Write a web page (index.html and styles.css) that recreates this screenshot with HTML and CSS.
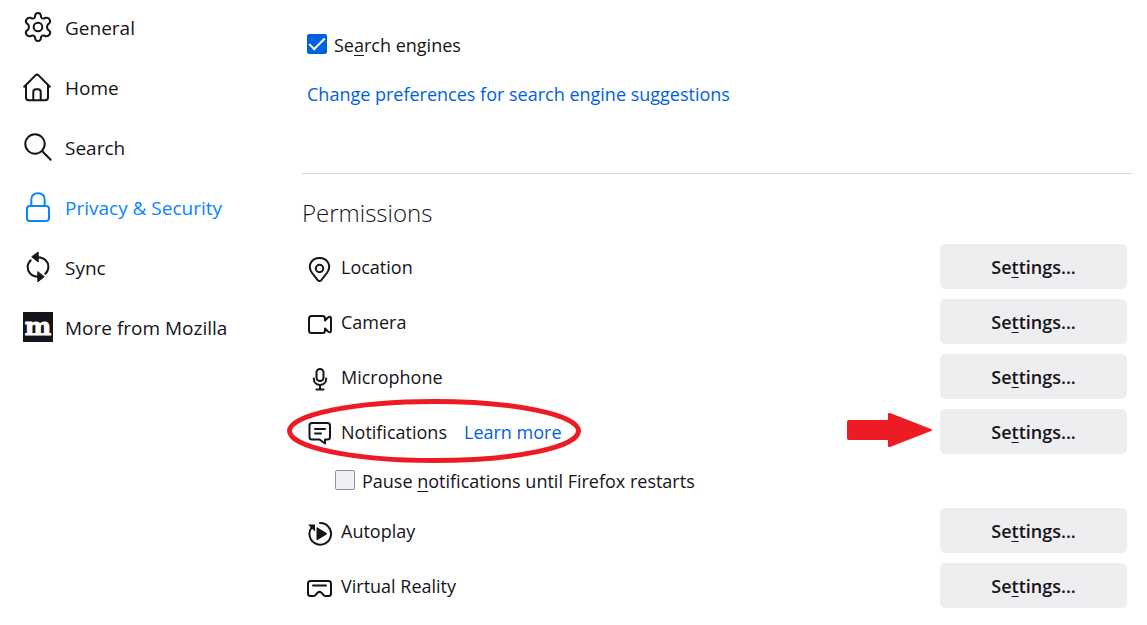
FILE: index.html
```
<!DOCTYPE html>
<html lang="en">
<head>
    <meta charset="UTF-8">
    <title>Settings</title>
    <link rel="stylesheet" href="styles.css">
</head>
<body>

    <!-- Categories -->
    <nav class="categories">
        <a class="category" href="#general">
            <svg class="category-icon" viewBox="0 0 30 30">
                <path d="M12.2 3.5Q12.5 1 15 1T17.8 3.5L18.2 5.4Q19 6.9 20.8 6.5L22.8 5.8Q25.2 5.2 26.6 7.6T26.1 11.4L24.6 12.8Q23.4 15 24.6 17.2L26.1 18.6Q28 20.2 26.6 22.4T22.8 24.2L20.8 23.5Q19 23.1 18.2 24.6L17.8 26.5Q17.5 29 15 29T12.2 26.5L11.8 24.6Q11 23.1 9.2 23.5L7.2 24.2Q4.8 24.8 3.4 22.4T3.9 18.6L5.4 17.2Q6.6 15 5.4 12.8L3.9 11.4Q2 9.8 3.4 7.6T7.2 5.8L9.2 6.5Q11 6.9 11.8 5.4Z"/>
                <circle cx="15" cy="15" r="4.3"/>
            </svg>
            <span>General</span>
        </a>
        <a class="category" href="#home">
            <svg class="category-icon" viewBox="0 0 30 30">
                <path d="M1.2 14.8 12.4 3.4Q14 1.8 15.6 3.4L26.8 14.8M3 13.5V25.5Q3 28.2 5.7 28.2H22.3Q25 28.2 25 25.5V13.5M10.3 28V20Q10.3 17.3 13 17.3H15Q17.7 17.3 17.7 20V28"/>
            </svg>
            <span>Home</span>
        </a>
        <a class="category" href="#search">
            <svg class="category-icon" viewBox="0 0 30 30">
                <circle cx="12" cy="12" r="9.7"/>
                <path d="M19 19 27.7 27.7"/>
            </svg>
            <span>Search</span>
        </a>
        <a class="category selected" href="#privacy">
            <svg class="category-icon" viewBox="0 0 30 30">
                <path d="M8.3 14V7.7Q8.3 1.2 15 1.2T21.7 7.7V14"/>
                <rect x="4" y="14" width="22" height="15" rx="2.8"/>
            </svg>
            <span>Privacy &amp; Security</span>
        </a>
        <a class="category" href="#sync">
            <svg class="category-icon" viewBox="0 0 30 30">
                <path d="M7.7 8.2C3.6 12.2 3.7 18.1 7.3 21.7Q10 24.7 15 24.8M15 5.2Q20 5.3 22.7 8.3C26.3 11.9 26.4 17.8 22.3 21.8"/>
                <path class="solid" d="M15.2.2V10L9 5.1ZM14.8 20V29.8L21 24.9Z"/>
            </svg>
            <span>Sync</span>
        </a>
        <a class="category" href="#mozilla">
            <svg class="category-icon" viewBox="0 0 30 30">
                <rect class="logo-tile" width="30" height="30"/>
                <text class="logo-letter" x="15" y="23" text-anchor="middle">m</text>
            </svg>
            <span>More from Mozilla</span>
        </a>
    </nav>

    <!-- Pane -->
    <main class="pane">
        <section class="suggestions">
            <div class="check-row">
                <input type="checkbox" id="search-engines" checked>
                <label for="search-engines">Se<u>a</u>rch engines</label>
            </div>
            <a class="link" href="#search">Change preferences for search engine suggestions</a>
        </section>

        <section class="permissions">
            <h2>Permissions</h2>

            <div class="permission">
                <svg class="permission-icon" viewBox="0 0 26 26">
                    <path d="M13.500 25Q14.500 25 15.300 24.100L20.900 17C26.500 9.300 20.800 2 13.500 2S.5 9.300 6.100 17L11.700 24.100Q12.500 25 13.500 25Z"/>
                    <circle cx="13.500" cy="12.500" r="3.700"/>
                </svg>
                <span id="location">Location</span>
                <button type="button" aria-describedby="location">Se<u>t</u>tings...</button>
            </div>

            <div class="permission">
                <svg class="permission-icon" viewBox="0 0 26 26">
                    <path d="M19 9V7.500Q19 5 16.500 5H5.500Q3 5 3 7.500V19.500Q3 22 5.500 22H16.500Q19 22 19 19.500V17.500L22 20.500Q25 22.500 25 19.500V7.500Q25 4.500 22 6.500L19 9.500"/>
                </svg>
                <span id="camera">Camera</span>
                <button type="button" aria-describedby="camera">Se<u>t</u>tings...</button>
            </div>

            <div class="permission">
                <svg class="permission-icon" viewBox="0 0 26 26">
                    <rect x="10.500" y="3" width="7" height="12" rx="3.500"/>
                    <path d="M7.800 12.500C7.800 21 20.200 21 20.200 12.500M14 19V23.500M10.500 23.500H17.500"/>
                </svg>
                <span id="microphone">Microphone</span>
                <button type="button" aria-describedby="microphone">Se<u>t</u>tings...</button>
            </div>

            <div class="permission">
                <svg class="permission-icon" viewBox="0 0 26 26">
                    <path d="M6 2H21.500Q24 2 24 4.500V16Q24 18.500 21.500 18.500H19V22.500L13.500 18.500H6Q3.500 18.500 3.500 16V4.500Q3.500 2 6 2ZM9 8H19M9 12.500H15"/>
                </svg>
                <span id="notifications">Notifications</span>
                <a class="link" href="#learn-more">Learn more</a>
                <button type="button" aria-describedby="notifications">Se<u>t</u>tings...</button>
                <!-- Markers over the notifications row -->
                <svg class="circle-mark" viewBox="0 0 294 64">
                    <ellipse cx="147" cy="32" rx="144.500" ry="29.500"/>
                </svg>
                <svg class="arrow-mark" viewBox="0 0 86 36">
                    <path d="M2 8H41V2Q41 .5 43 1L84 17Q86 18 84 19L43 35Q41 35.500 41 34V28H2Q0 28 0 26V10Q0 8 2 8Z"/>
                </svg>
            </div>

            <div class="check-row pause">
                <input type="checkbox" id="pause-notifications">
                <label for="pause-notifications">Pause <u>n</u>otifications until Firefox restarts</label>
            </div>

            <div class="permission">
                <svg class="permission-icon" viewBox="0 0 26 26">
                    <path d="M14 3A10.800 10.800 0 1 1 5.500 7.500"/>
                    <path class="solid flat" d="M2 4.500H9V11.500L6.500 9 4.500 9.500V7ZM10.500 8Q10.500 7 11.500 7.500L20.500 13Q21.300 13.700 20.500 14.400L11.500 20Q10.500 20.500 10.500 19.500Z"/>
                </svg>
                <span id="autoplay">Autoplay</span>
                <button type="button" aria-describedby="autoplay">Se<u>t</u>tings...</button>
            </div>

            <div class="permission">
                <svg class="permission-icon" viewBox="0 0 26 26">
                    <path d="M4.500 6H22.500Q25 6 25 8.500V18.500Q25 21 22.500 21H19.500Q18 21 17 19.500L15.500 17.700Q13.500 16 11.500 17.700L10 19.500Q9 21 7.500 21H4.500Q2 21 2 18.500V8.500Q2 6 4.500 6ZM7 10.500H20"/>
                </svg>
                <span id="virtual-reality">Virtual Reality</span>
                <button type="button" aria-describedby="virtual-reality">Se<u>t</u>tings...</button>
            </div>
        </section>
    </main>

</body>
</html>
```

FILE: styles.css
```
/* Base Styles */
body {
    display: flex;
    margin: 0;
    background-color: #fff;
    color: #15141a;
    font-family: "Open Sans", "Noto Sans", sans-serif;
    font-size: 18px;
    line-height: 24px;
}

a {
    color: inherit;
    text-decoration: none;
}

.link {
    color: #0061e0;
}

.link:hover {
    text-decoration: underline;
}

u {
    text-underline-offset: 3px;
    text-decoration-thickness: 1px;
    text-decoration-skip-ink: none;
}

svg {
    flex: none;
    fill: none;
    stroke: currentColor;
    stroke-width: 2;
    stroke-linecap: round;
    stroke-linejoin: round;
}

.solid {
    fill: currentColor;
    stroke-width: 1;
}

.flat {
    stroke: none;
}

/* Categories */
.categories {
    display: flex;
    flex: none;
    flex-direction: column;
    gap: 30px;
    width: 279px;
    padding: 12px 0 0 23px;
}

.category {
    display: flex;
    align-items: center;
    gap: 12px;
    height: 30px;
    font-size: 19px;
}

.category span {
    padding-top: 2px;
}

.category.selected {
    color: #0a84ff;
}

.category-icon {
    width: 30px;
    height: 30px;
}

.logo-tile {
    fill: #15141a;
    stroke: none;
}

.logo-letter {
    fill: #fff;
    stroke: #fff;
    stroke-width: 1;
    font-family: "DejaVu Serif", serif;
    font-size: 25px;
    font-weight: bold;
    line-height: 30px;
}

/* Pane */
.pane {
    flex: 1;
    padding: 33px 15px 16px 0;
}

.suggestions {
    padding: 0 5px 67px;
    border-bottom: 1px solid #d7d7db;
}

.suggestions .link {
    display: block;
    margin-top: 25px;
}

/* Checkboxes */
.check-row {
    display: flex;
    align-items: center;
    gap: 7px;
}

.check-row input {
    flex: none;
    width: 20px;
    height: 20px;
    margin: 0 0 2px;
    border: 1px solid #8f8f9d;
    border-radius: 2px;
    background-color: #f0f0f4;
    appearance: none;
}

.check-row input:checked {
    display: grid;
    place-items: center;
    border-color: #0061e0;
    background-color: #0061e0;
}

.check-row input:checked::before {
    content: "";
    width: 16px;
    height: 8px;
    margin-bottom: 5px;
    border: solid #fff;
    border-width: 0 0 2px 2px;
    box-sizing: border-box;
    transform: rotate(-45deg);
}

/* Permissions */
.permissions {
    display: flex;
    flex-direction: column;
    gap: 10px;
    padding-right: 5px;
}

.permissions h2 {
    margin: 23px 0 5px;
    font-size: 24px;
    font-weight: 300;
    line-height: 32px;
}

.permission {
    display: flex;
    position: relative;
    align-items: center;
    height: 45px;
    padding-left: 4px;
}

.permission-icon {
    width: 26px;
    height: 26px;
    margin: 4px 9px 0 0;
}

.permission .link {
    margin-left: 17px;
}

.permission button {
    width: 187px;
    height: 45px;
    margin-left: auto;
    padding: 0;
    border: 0;
    border-radius: 5px;
    background-color: #eeeef0;
    color: inherit;
    font: inherit;
    font-weight: 600;
}

.permission button:hover {
    background-color: #e0e0e6;
}

.pause {
    height: 34px;
    padding-left: 33px;
}

/* Red markers */
.circle-mark,
.arrow-mark {
    position: absolute;
    pointer-events: none;
}

.circle-mark {
    top: -10px;
    left: -15px;
    width: 294px;
    height: 64px;
    stroke: #ed1c24;
    stroke-width: 5;
}

.arrow-mark {
    top: 3px;
    right: 194px;
    width: 86px;
    height: 36px;
    fill: #ed1c24;
    stroke: none;
}
```
